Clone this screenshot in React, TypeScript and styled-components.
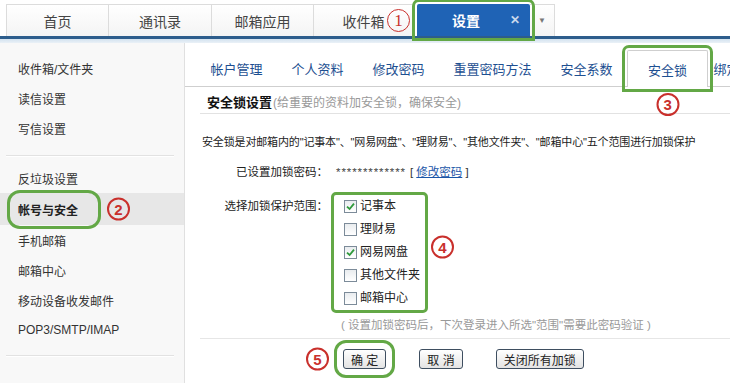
import * as React from 'react'
import styled, { createGlobalStyle, css } from 'styled-components'

const GREEN = '#63a846'
const RED = '#c9302c'
const FONT = `"Liberation Sans", "Noto Sans CJK SC", sans-serif`

const GlobalStyle = createGlobalStyle`
  html, body {
    margin: 0;
    padding: 0;
    background: #fff;
  }
  body {
    font-family: ${FONT};
    font-size: 12px;
    color: #333;
  }
  * {
    box-sizing: border-box;
  }
`

const Page = styled.div`
  position: relative;
  width: 730px;
  height: 383px;
  overflow: hidden;
  display: flex;
  flex-direction: column;
  background: #fff;
`

// circled numbers drawn over the screenshot
const Badge = styled.span<{ $serif?: boolean }>`
  position: absolute;
  width: 23px;
  height: 23px;
  border: 2px solid ${RED};
  border-radius: 50%;
  color: ${RED};
  display: flex;
  align-items: center;
  justify-content: center;
  line-height: 1;
  font-weight: normal;
  letter-spacing: 0;
  ${(p) =>
    p.$serif
      ? css`
          border-width: 1.5px;
          font: 17px 'Liberation Serif', serif;
        `
      : css`
          font: bold 15px 'Liberation Sans', sans-serif;
        `}
`

/* ---------- top bar ---------- */

const Header = styled.header`
  flex: none;
`

const TopBar = styled.div`
  display: flex;
  align-items: flex-end;
  height: 39px;
  padding: 4px 0 0 7px;
  background: #fff;
  border-bottom: 3px solid #2d5d8c;
`

const Band = styled.div`
  height: 4px;
  background: linear-gradient(#d3e2ef, #eaf1f7);
`

const TopTab = styled.div<{ $w: number }>`
  position: relative;
  width: ${(p) => p.$w}px;
  height: 32px;
  margin-left: -1px;
  display: flex;
  align-items: center;
  justify-content: center;
  border: 1px solid #dcdcdc;
  border-bottom: none;
  background: linear-gradient(#ffffff, #f4f4f4);
  font-size: 14px;
  color: #444;
`

const ActiveTopTab = styled.div`
  position: relative;
  width: 113px;
  height: 32px;
  margin-left: 3px;
  display: flex;
  align-items: center;
  justify-content: space-between;
  padding: 0 10px 0 35px;
  background: #1f63b5;
  color: #fff;
  font-size: 14px;
  font-weight: bold;
  border-radius: 2px 2px 0 0;
  outline: 3px solid ${GREEN};
  outline-offset: 2px;
`

const Close = styled.span`
  font-size: 12px;
  color: #c9d8ec;
`

const MoreTab = styled.div`
  width: 25px;
  height: 32px;
  display: flex;
  align-items: center;
  justify-content: center;
  border: 1px solid #dcdcdc;
  border-bottom: none;
  border-left: none;
  background: linear-gradient(#ffffff, #f4f4f4);
  color: #777;
  font-size: 8px;
`

const InboxBadge = styled(Badge)`
  left: 73px;
  top: 4px;
`

/* ---------- sidebar ---------- */

const Body = styled.div`
  flex: 1;
  display: flex;
  min-height: 0;
`

const Sidebar = styled.nav`
  width: 185px;
  flex: none;
  padding-top: 10px;
  background: #f8f8f8;
  border-right: 1px solid #e0e0e0;
`

const SideItem = styled.div<{ $active?: boolean }>`
  position: relative;
  height: 30px;
  display: flex;
  align-items: center;
  padding-left: 18px;
  color: #333;
  ${(p) =>
    p.$active &&
    css`
      height: 32px;
      background: #e7e7e7;
      font-weight: bold;
      color: #222;
    `}
`

const SideCallout = styled.span`
  position: relative;
  padding-right: 12px;
  border-radius: 2px;
  outline: 3px solid ${GREEN};
  outline-offset: 8px;
`

const SideBadge = styled(Badge)`
  left: calc(100% + 17px);
  top: 50%;
  transform: translateY(-50%);
`

const SideDivider = styled.hr<{ $top: number }>`
  height: 0;
  margin: ${(p) => p.$top}px 10px 6px 6px;
  border: 0;
  border-top: 1px solid #e2e2e2;
  border-bottom: 1px solid #fff;
`

/* ---------- main ---------- */

const Main = styled.main`
  flex: 1;
  min-width: 0;
  overflow: hidden;
`

const SubTabs = styled.div`
  display: flex;
  align-items: flex-start;
  height: 44px;
  padding: 7px 0 0 11px;
  border-bottom: 1px solid #cfcfcf;
  white-space: nowrap;
`

const SubTab = styled.div<{ $active?: boolean }>`
  position: relative;
  flex: none;
  height: 37px;
  display: flex;
  align-items: center;
  padding: 0 14.5px;
  font-size: 13px;
  color: #1d4f91;
  ${(p) =>
    p.$active &&
    css`
      padding: 0 20px;
      margin-right: -9px;
      background: #fff;
      border: 1px solid #cfcfcf;
      border-bottom: none;
      border-radius: 2px 2px 0 0;
      outline: 3px solid ${GREEN};
      outline-offset: 2px;
    `}
`

const TabBadge = styled(Badge)`
  left: 50%;
  top: calc(100% + 6px);
  transform: translateX(-50%);
`

const SectionHead = styled.div`
  display: flex;
  align-items: center;
  height: 27px;
  margin-left: 15px;
  padding: 2px 0 0 7px;
  border-bottom: 1px solid #e2e2e2;
  white-space: nowrap;
`

const Title = styled.span`
  font-size: 13px;
  font-weight: bold;
  color: #111;
`

const Hint = styled.span`
  margin-left: 1px;
  color: #999;
`

const Content = styled.div`
  padding: 17px 0 0 17px;
  font-size: 11.5px;
`

const Intro = styled.p`
  margin: 0;
  line-height: 23px;
  font-size: 11px;
  letter-spacing: -0.15px;
  white-space: nowrap;
  color: #222;
`

const FormRow = styled.div<{ $gap: number }>`
  display: flex;
  align-items: flex-start;
  margin-top: ${(p) => p.$gap}px;
  padding-left: 2px;
`

const Label = styled.div`
  width: 124px;
  flex: none;
  line-height: 23px;
  text-align: right;
  color: #222;
`

const Field = styled.div`
  margin-left: 6px;
  line-height: 23px;
  white-space: nowrap;
`

const Stars = styled.span`
  margin: 0 4px 0 2px;
  letter-spacing: 0.9px;
  color: #444;
`

const Link = styled.a`
  color: #1a56a8;
  text-decoration: underline;
`

const CheckList = styled.div`
  position: relative;
  width: 91px;
  padding-left: 10px;
  border-radius: 2px;
  outline: 3px solid ${GREEN};
`

const CheckRow = styled.label`
  display: flex;
  align-items: center;
  gap: 3px;
  height: 23px;
  font-size: 12px;
  color: #222;
`

const Box = styled.span`
  width: 13px;
  height: 13px;
  flex: none;
  display: flex;
  align-items: center;
  justify-content: center;
  border: 1px solid #7c8b99;
  background: linear-gradient(#e9ecef, #ffffff);
`

const ListBadge = styled(Badge)`
  left: calc(100% + 6px);
  top: 45%;
  transform: translateY(-50%);
`

const Note = styled.div`
  margin: 5px 0 0 139px;
  line-height: 20px;
  color: #999;
  white-space: nowrap;
`

const Rule = styled.div`
  margin: 3px 0 0 -2px;
  border-top: 1px solid #e6e6e6;
`

const Actions = styled.div`
  display: flex;
  gap: 33px;
  margin: 10px 0 0 141px;
`

const Button = styled.button<{ $marked?: boolean }>`
  position: relative;
  height: 20px;
  padding: 0 7px;
  border: 1px solid #3e4e60;
  border-radius: 3px;
  background: linear-gradient(#ffffff, #e3e3e3);
  font-family: ${FONT};
  font-size: 12px;
  color: #222;
  ${(p) =>
    p.$marked &&
    css`
      outline: 3px solid ${GREEN};
      outline-offset: 6px;
    `}
`

const ButtonBadge = styled(Badge)`
  right: calc(100% + 15px);
  top: 50%;
  transform: translateY(-50%);
`

const Check = () => (
  <svg width="9" height="9" viewBox="0 0 9 9">
    <path d="M1 4.6 L3.6 7 L8 1.6" fill="none" stroke="#2f9a3c" strokeWidth="1.8" />
  </svg>
)

const scopes = [
  { name: '记事本', checked: true },
  { name: '理财易', checked: false },
  { name: '网易网盘', checked: true },
  { name: '其他文件夹', checked: false },
  { name: '邮箱中心', checked: false },
]

const App = (): JSX.Element => (
  <Page>
    <GlobalStyle />
    <Header>
      <TopBar>
        <TopTab $w={103}>首页</TopTab>
        <TopTab $w={104}>通讯录</TopTab>
        <TopTab $w={103}>邮箱应用</TopTab>
        <TopTab $w={101}>
          收件箱
          <InboxBadge $serif>1</InboxBadge>
        </TopTab>
        <ActiveTopTab>
          <span>设置</span>
          <Close>✕</Close>
        </ActiveTopTab>
        <MoreTab>▼</MoreTab>
      </TopBar>
      <Band />
    </Header>
    <Body>
      <Sidebar>
        <SideItem>收件箱/文件夹</SideItem>
        <SideItem>读信设置</SideItem>
        <SideItem>写信设置</SideItem>
        <SideDivider $top={12} />
        <SideItem>反垃圾设置</SideItem>
        <SideItem $active>
          <SideCallout>
            帐号与安全
            <SideBadge>2</SideBadge>
          </SideCallout>
        </SideItem>
        <SideItem>手机邮箱</SideItem>
        <SideItem>邮箱中心</SideItem>
        <SideItem>移动设备收发邮件</SideItem>
        <SideItem>POP3/SMTP/IMAP</SideItem>
        <SideDivider $top={10} />
      </Sidebar>
      <Main>
        <SubTabs>
          <SubTab>帐户管理</SubTab>
          <SubTab>个人资料</SubTab>
          <SubTab>修改密码</SubTab>
          <SubTab>重置密码方法</SubTab>
          <SubTab>安全系数</SubTab>
          <SubTab $active>
            安全锁
            <TabBadge>3</TabBadge>
          </SubTab>
          <SubTab>绑定</SubTab>
        </SubTabs>
        <SectionHead>
          <Title>安全锁设置</Title>
          <Hint>(给重要的资料加安全锁，确保安全)</Hint>
        </SectionHead>
        <Content>
          <Intro>
            安全锁是对邮箱内的"记事本"、"网易网盘"、"理财易"、"其他文件夹"、"邮箱中心"五个范围进行加锁保护
          </Intro>
          <FormRow $gap={7}>
            <Label>已设置加锁密码：</Label>
            <Field>
              <Stars>*************</Stars>[ <Link>修改密码</Link> ]
            </Field>
          </FormRow>
          <FormRow $gap={11}>
            <Label>选择加锁保护范围：</Label>
            <Field>
              <CheckList>
                {scopes.map((s) => (
                  <CheckRow key={s.name}>
                    <Box>{s.checked && <Check />}</Box>
                    {s.name}
                  </CheckRow>
                ))}
                <ListBadge>4</ListBadge>
              </CheckList>
            </Field>
          </FormRow>
          <Note>( 设置加锁密码后，下次登录进入所选"范围"需要此密码验证 )</Note>
          <Rule />
          <Actions>
            <Button $marked>
              确 定
              <ButtonBadge>5</ButtonBadge>
            </Button>
            <Button>取 消</Button>
            <Button>关闭所有加锁</Button>
          </Actions>
        </Content>
      </Main>
    </Body>
  </Page>
)

export default App
